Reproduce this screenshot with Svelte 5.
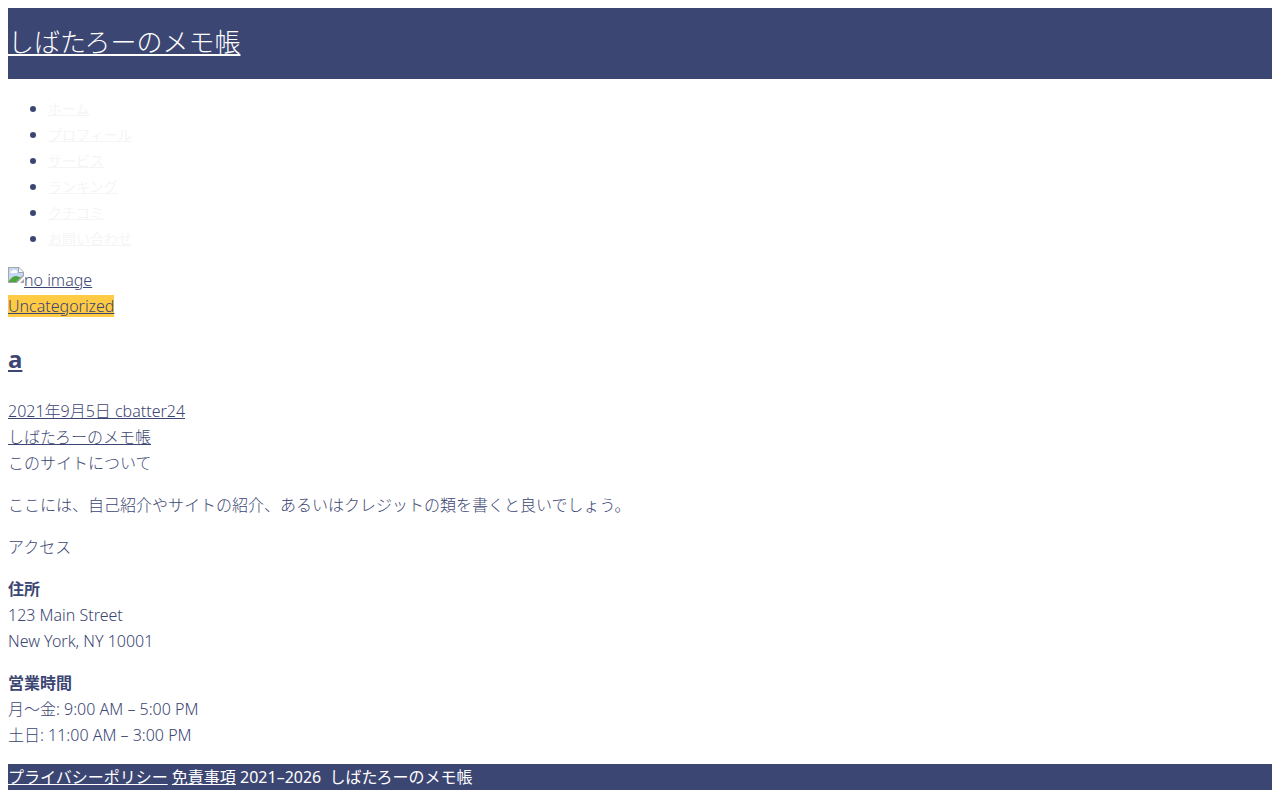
<script>
  const menu = ['ホーム', 'プロフィール', 'サービス', 'ランキング', 'クチコミ', 'お問い合わせ'];
</script>

<header><a class="logo" href="#home">しばたろーのメモ帳</a></header>

<nav aria-label="メイン">
  <ul>
    {#each menu as item}
      <li><a href="#menu">{item}</a></li>
    {/each}
  </ul>
</nav>

<main>
  <article>
    <a class="thumb" href="#post"><svg width="16" height="16" viewBox="0 0 16 16" aria-hidden="true">
      <path d="M0 0H11L16 5V9L9 16H0Z" fill="#a3a6ab" />
      <path d="M1 1H10V6H15V8L8 15H1Z" fill="#c4d7f5" />
      <path d="M3 6a1 1 0 0 1 1-2 2 2 0 0 1 3-1 2 2 0 0 1 2 3Z" fill="#fff" />
      <path d="M1 15V14Q6 7 11 10L13 10L8 15Z" fill="#4ba53b" />
      <path d="M11 1V5H15Z" fill="#fff" />
      <path d="M12 16L16 12V16Z" fill="#a3a6ab" />
    </svg>no image</a>
    <div><a class="category" href="#category">Uncategorized</a></div>
    <h2><a href="#post">a</a></h2>
    <div><a href="#post">2021年9月5日 cbatter24</a></div>
  </article>
</main>

<footer>
  <a href="#home">しばたろーのメモ帳</a>
  <div>このサイトについて</div>
  <p>ここには、自己紹介やサイトの紹介、あるいはクレジットの類を書くと良いでしょう。</p>
  <div>アクセス</div>
  <p><strong>住所</strong><br />123 Main Street<br />New York, NY 10001</p>
  <p><strong>営業時間</strong><br />月〜金: 9:00 AM – 5:00 PM<br />土日: 11:00 AM – 3:00 PM</p>
  <div class="legal">
    <a href="#privacy">プライバシーポリシー</a>
    <a href="#disclaimer">免責事項</a>
    <span>2021–2026&nbsp; しばたろーのメモ帳</span>
  </div>
</footer>

<style>
  :global(body) {
    margin: 8px;
    color: #3c4673;
    background: #fff;
    font: 300 16px/26px "Noto Sans", "Noto Sans CJK JP", sans-serif;
  }
  a { color: inherit; }
  header { display: flex; padding: 13px 0 16px; background: #3c4673; color: #fff; line-height: 42px; }
  .logo { font-size: 26px; }
  ul { margin: 16px 0; padding-left: 40px; }
  li a { color: #f5f5f5; font-size: 14px; line-height: 20px; font-weight: 400; }
  .thumb { display: block; }
  .thumb svg { vertical-align: top; }
  .category { background: #ffca44; }
  h2 { margin: 20px 0; font-size: 24px; line-height: 39px; font-weight: 700; }
  p { margin: 16px 0; }
  strong { font-weight: 700; }
  .legal { background: #3c4673; color: #fff; font-weight: 400; }
</style>
